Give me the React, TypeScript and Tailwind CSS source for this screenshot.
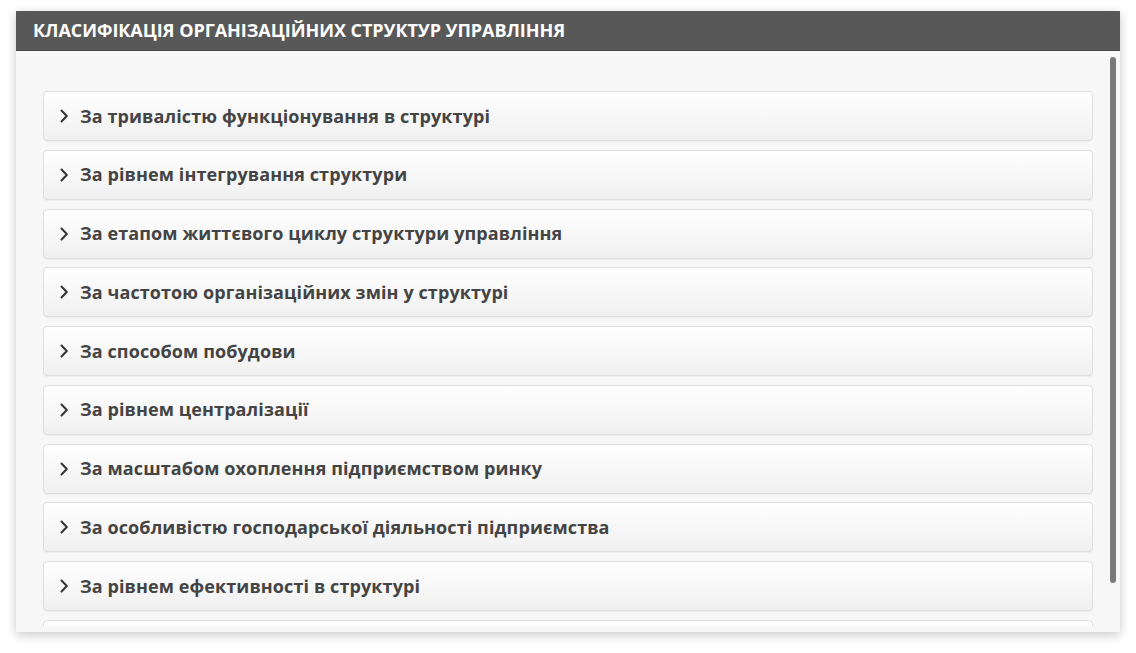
import React from "react";

const items = [
  "За тривалістю функціонування в структурі",
  "За рівнем інтегрування структури",
  "За етапом життєвого циклу структури управління",
  "За частотою організаційних змін у структурі",
  "За способом побудови",
  "За рівнем централізації",
  "За масштабом охоплення підприємством ринку",
  "За особливістю господарської діяльності підприємства",
  "За рівнем ефективності в структурі",
];

function Chevron() {
  return (
    <svg width="10" height="14" viewBox="0 0 10 14" className="shrink-0">
      <path d="M2.5 1.5 L7.8 7 L2.5 12.5" fill="none" stroke="#333" strokeWidth="2" strokeLinecap="round" strokeLinejoin="round" />
    </svg>
  );
}

export default function App() {
  return (
    <div className="w-[1136px] h-[653px] bg-white pt-[11px] pl-[16px]" style={{ fontFamily: '"Open Sans", "Noto Sans", sans-serif' }}>
      <div className="w-[1104px] h-[621px] flex flex-col shadow-[0_3px_10px_rgba(0,0,0,0.22)]">
        <div className="h-[40px] bg-[#585858] flex items-center pl-[17px] shrink-0 border-b border-[#4a4a4a]">
          <span className="text-white font-bold text-[18px] tracking-[-0.05px]">КЛАСИФІКАЦІЯ ОРГАНІЗАЦІЙНИХ СТРУКТУР УПРАВЛІННЯ</span>
        </div>
        <div className="relative flex-1 bg-[#f7f7f7] overflow-hidden">
          <div className="flex flex-col gap-[8.75px] pt-[40px] pl-[27px] w-[1077px] h-[575px] overflow-hidden">
            {items.map((t) => (
              <div
                key={t}
                className="h-[50px] shrink-0 rounded-[4px] border border-[#dedede] bg-gradient-to-b from-[#ffffff] to-[#f0f0f0] flex items-center pl-[15px] gap-[11px] shadow-[0_1px_1px_rgba(0,0,0,0.04)]"
              >
                <Chevron />
                <span className="text-[18px] font-bold text-[#444444] tracking-[0.1px]">{t}</span>
              </div>
            ))}
            <div className="h-[50px] shrink-0 rounded-[4px] border border-[#dedede] bg-gradient-to-b from-[#ffffff] to-[#f0f0f0]" />
          </div>
          <div className="absolute left-[1094px] top-[6px] w-[6px] h-[526px] rounded-full bg-[#7a7a7a]" />
        </div>
      </div>
    </div>
  );
}
